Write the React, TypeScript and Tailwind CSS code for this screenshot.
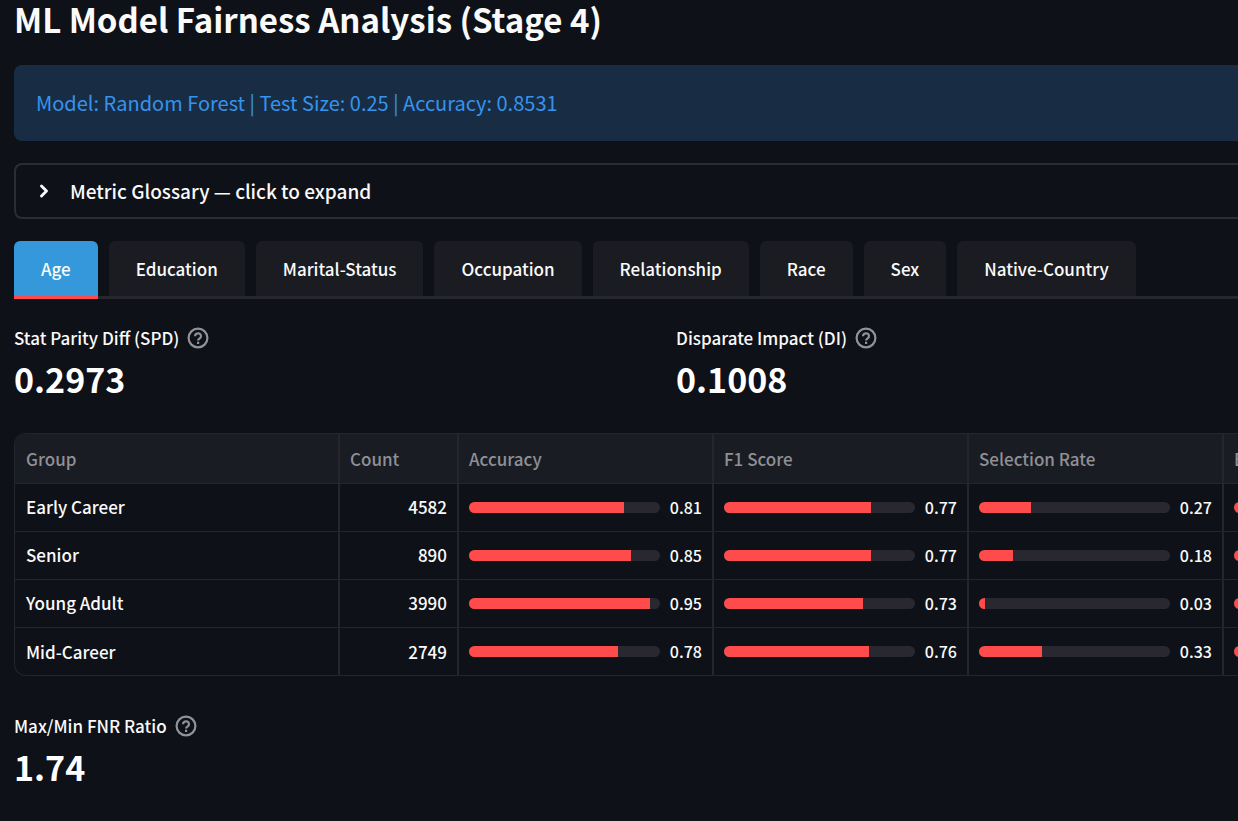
import { ChevronRight } from 'lucide-react';

const tabs = ['Age', 'Education', 'Marital-Status', 'Occupation', 'Relationship', 'Race', 'Sex', 'Native-Country'];

const rows = [
  { group: 'Early Career', count: 4582, accuracy: 0.81, f1: 0.77, selection: 0.27 },
  { group: 'Senior', count: 890, accuracy: 0.85, f1: 0.77, selection: 0.18 },
  { group: 'Young Adult', count: 3990, accuracy: 0.95, f1: 0.73, selection: 0.03 },
  { group: 'Mid-Career', count: 2749, accuracy: 0.78, f1: 0.76, selection: 0.33 },
];

function HelpIcon() {
  return (
    <svg className="w-[22px] h-[22px] text-[#929397]" viewBox="0 0 22 22" fill="none" stroke="currentColor" strokeWidth="2.2">
      <circle cx="11" cy="11" r="9.4" />
      <path d="M8 9.2a3 2.8 0 1 1 4.7 2.2c-1 .7-1.6 1-1.6 2.2" />
      <path d="M11.1 14.7v2.3" />
    </svg>
  );
}

function Metric({ label, value }: { label: string; value: string }) {
  return (
    <div>
      <div className="flex items-center gap-2 h-7">
        <span className="text-[17px] font-medium">{label}</span>
        <button type="button" aria-label={`Help for ${label}`}>
          <HelpIcon />
        </button>
      </div>
      <div className="mt-0.5 text-[34px] leading-[50px] font-bold text-white">{value}</div>
    </div>
  );
}

function Bar({ value }: { value: number }) {
  return (
    <div className="flex items-center gap-2.5">
      <div className="flex-1 h-[11px] rounded-full bg-[#292830] overflow-hidden">
        <div className="h-full bg-[#ff4b4b]" style={{ width: `${value * 100}%` }} />
      </div>
      <span className="text-[16px] font-medium">{value.toFixed(2)}</span>
    </div>
  );
}

export default function App() {
  return (
    <main className="min-h-screen overflow-hidden bg-[#0e1117] pl-3.5 text-[#fafafa] font-['Noto_Sans_CJK_SC',sans-serif]">
      <h1 className="text-[33px] leading-[38px] font-bold">ML Model Fairness Analysis (Stage 4)</h1>

      <div className="mt-[27px] h-[76px] flex items-center rounded-l-lg bg-[#182d43] pl-[22px] text-[20px] text-[#3693ee]">
        Model: Random Forest | Test Size: 0.25 | Accuracy: 0.8531
      </div>

      <button
        type="button"
        aria-expanded="false"
        className="mt-[22px] w-full h-14 flex items-center gap-4 rounded-l-lg border-2 border-r-0 border-[#2b2d33] pl-[18px] text-[19px] font-medium"
      >
        <ChevronRight className="w-5 h-5" strokeWidth={3.5} />
        Metric Glossary — click to expand
      </button>

      <div role="tablist" className="mt-[22px] flex gap-[11px] border-b-3 border-[#26272c] text-[17px] font-medium">
        {tabs.map((tab, i) => (
          <button
            key={tab}
            type="button"
            role="tab"
            aria-selected={i === 0}
            className={`px-[27px] rounded-t-md ${
              i === 0 ? 'h-[58px] -mb-[3px] border-b-3 border-[#ff4b4b] bg-[#3498db]' : 'h-[55px] bg-[#1b1c21]'
            }`}
          >
            {tab}
          </button>
        ))}
      </div>

      <div className="mt-[25px] grid grid-cols-2 gap-25">
        <Metric label="Stat Parity Diff (SPD)" value="0.2973" />
        <Metric label="Disparate Impact (DI)" value="0.1008" />
      </div>

      <div className="mt-[29px] rounded-l-xl border border-r-0 border-[#24262c] overflow-hidden">
        <table className="w-full table-fixed text-[17px]">
          <colgroup>
            <col className="w-[324px]" />
            <col className="w-[119px]" />
            <col className="w-[255px]" />
            <col className="w-[255px]" />
            <col className="w-[255px]" />
            <col />
          </colgroup>
          <thead>
            <tr className="h-[49px] bg-[#1a1c24] text-left text-[#8f9095] [&>th]:font-medium [&>th]:px-2.5 [&>th]:border-r-2 [&>th]:border-[#24262c] [&>th:first-child]:pl-[11px] [&>th:last-child]:border-r-0">
              <th>Group</th>
              <th>Count</th>
              <th>Accuracy</th>
              <th>F1 Score</th>
              <th>Selection Rate</th>
              <th className="overflow-hidden">E</th>
            </tr>
          </thead>
          <tbody>
            {rows.map((row) => (
              <tr
                key={row.group}
                className="h-12 border-t border-[#24262c] [&>td]:px-2.5 [&>td]:border-r-2 [&>td]:border-[#24262c] [&>td:first-child]:pl-[11px] [&>td:last-child]:border-r-0"
              >
                <td className="font-medium">{row.group}</td>
                <td className="text-right font-medium">{row.count}</td>
                <td><Bar value={row.accuracy} /></td>
                <td><Bar value={row.f1} /></td>
                <td><Bar value={row.selection} /></td>
                <td className="overflow-hidden">
                  <div className="w-48 h-[11px] rounded-full bg-[#ff4b4b]" />
                </td>
              </tr>
            ))}
          </tbody>
        </table>
      </div>

      <div className="mt-9 pb-6">
        <Metric label="Max/Min FNR Ratio" value="1.74" />
      </div>
    </main>
  );
}
